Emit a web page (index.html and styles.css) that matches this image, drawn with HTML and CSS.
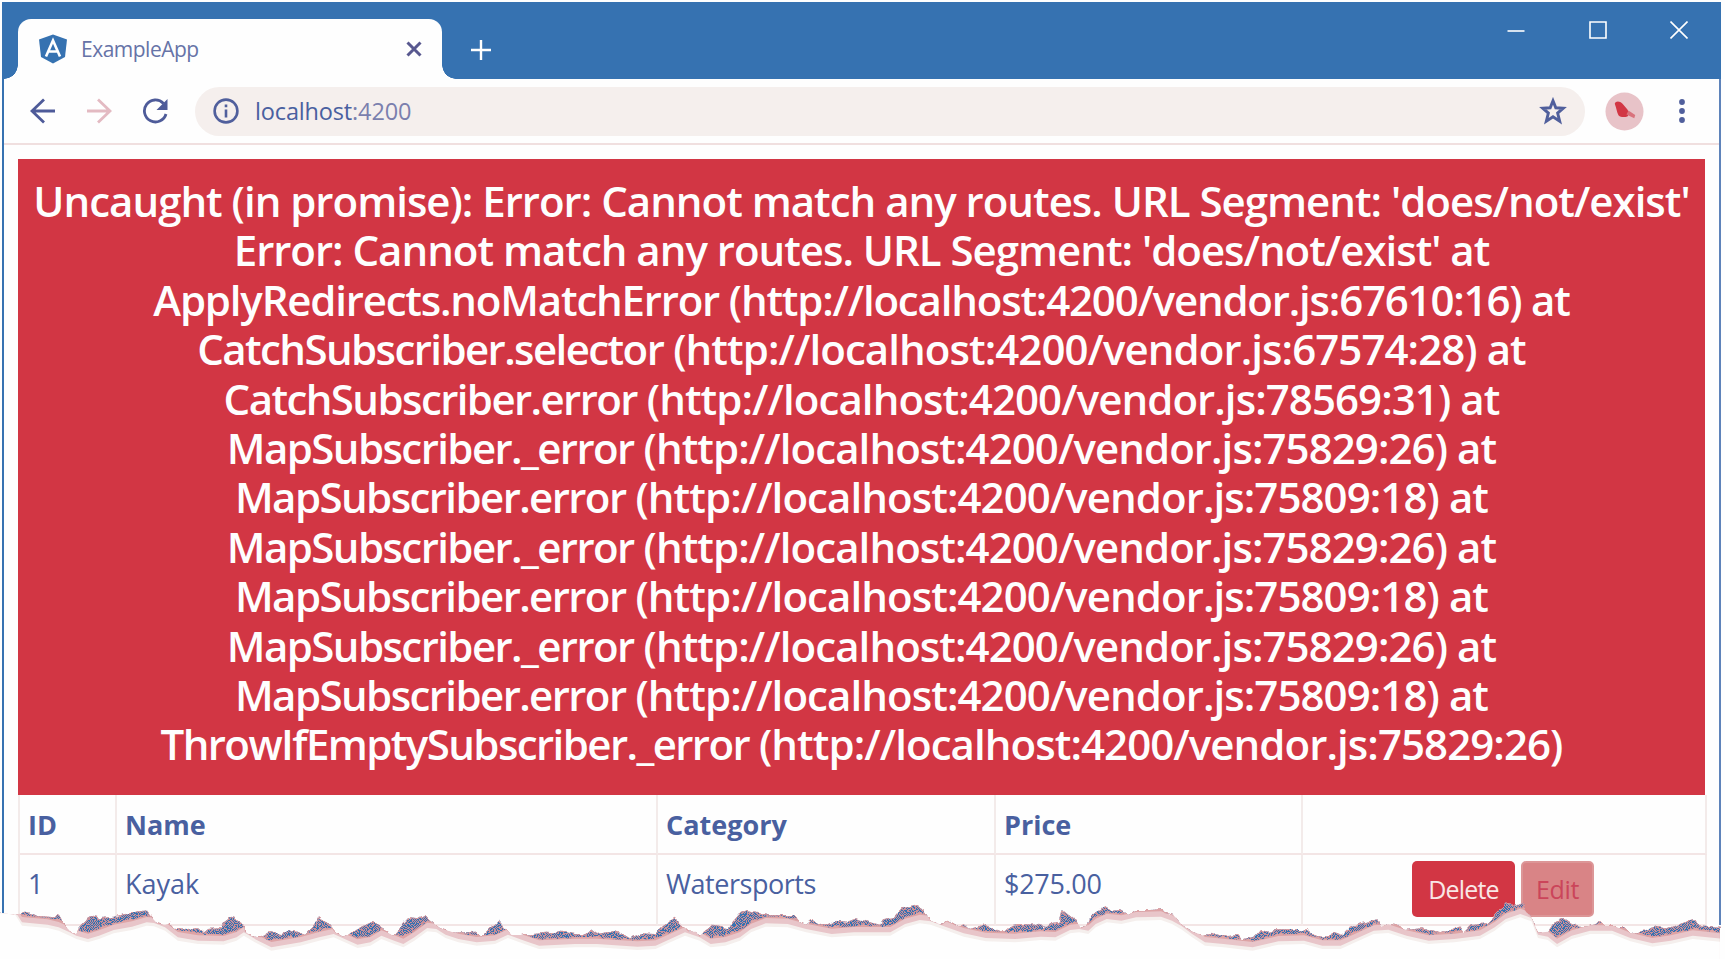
FILE: index.html
```html
<!DOCTYPE html>
<html lang="en">
<head>
<meta charset="utf-8">
<title>ExampleApp</title>
<link rel="stylesheet" href="styles.css">
</head>
<body>
<div class="window">
  <header class="titlebar">
    <div class="tab">
      <svg class="tab-logo" viewBox="0 0 30 30"><path fill="#3672b1" d="M15 0.5 29 5.5 27 23 15 29.5 3 23 1 5.5Z"/><path fill="none" stroke="#fff" stroke-width="2.6" d="M8 22.5 15 6.5 22 22.5M11 17.5H19"/></svg>
      <span class="tab-title">ExampleApp</span>
      <svg class="tab-close" viewBox="0 0 16 16"><path d="M1.5 1.5 14.5 14.5M14.5 1.5 1.5 14.5"/></svg>
    </div>
    <svg class="new-tab" viewBox="0 0 22 22"><path d="M11 1V21M1 11H21"/></svg>
    <div class="controls">
      <svg viewBox="0 0 18 18"><path d="M0.5 10H17.5"/></svg>
      <svg viewBox="0 0 18 18"><path d="M1 1H17V17H1Z"/></svg>
      <svg viewBox="0 0 18 18"><path d="M0.5 0.5 17.5 17.5M17.5 0.5 0.5 17.5"/></svg>
    </div>
  </header>
  <nav class="toolbar">
    <svg class="nav-icon" viewBox="0 0 26 26"><path d="M25 13H2M14 1.5 2 13 14 24.5"/></svg>
    <svg class="nav-icon forward" viewBox="0 0 26 26"><path d="M1 13H24M12 1.5 24 13 12 24.5"/></svg>
    <svg class="nav-icon" viewBox="0 0 26 26"><path d="M21.5 5.5A11 11 0 1 0 24 16"/><path class="solid" d="M25.5 1V12H14.5Z"/></svg>
    <div class="address">
      <svg class="info" viewBox="0 0 26 26"><circle cx="13" cy="13" r="11.4"/><path d="M13 11.5V19.5M13 6.5V9.2"/></svg>
      <span class="url"><b>localhost</b>:4200</span>
      <svg class="star" viewBox="0 0 26 26"><path d="M13 3.5 15.6 10 22.5 10.4 17.3 14.9 19.2 22.5 13 18.3 6.8 22.5 8.7 14.9 3.5 10.4 10.4 10Z"/></svg>
    </div>
    <svg class="avatar" viewBox="0 0 40 40"><circle cx="20" cy="20" r="19.5" fill="#e8c3c8"/><path fill="#d23644" d="M10 12C11 9 15 9 18 12L23 18 25 22 23 25C20 26 16 26 14 24C12 21 12 17 10 12Z"/><path fill="#d9727c" d="M24 19 31 23.5 30 27 22 23Z"/></svg>
    <svg class="menu" viewBox="0 0 8 26"><circle cx="4" cy="4" r="2.9"/><circle cx="4" cy="13" r="2.9"/><circle cx="4" cy="22" r="2.9"/></svg>
  </nav>
  <main class="content">
    <div class="banner">
      <div class="l1">Uncaught (in promise): Error: Cannot match any routes. URL Segment: 'does/not/exist'</div>
      <div class="l2">Error: Cannot match any routes. URL Segment: 'does/not/exist' at</div>
      <div class="l3">ApplyRedirects.noMatchError (http://localhost:4200/vendor.js:67610:16) at</div>
      <div class="frame"><span class="fn">CatchSubscriber.selector</span> (http://localhost:4200/vendor.js:67574:28) at</div>
      <div class="frame"><span class="fn">CatchSubscriber.error</span> (http://localhost:4200/vendor.js:78569:31) at</div>
      <div class="frame"><span class="fn">MapSubscriber._error</span> (http://localhost:4200/vendor.js:75829:26) at</div>
      <div class="frame"><span class="fn">MapSubscriber.error</span> (http://localhost:4200/vendor.js:75809:18) at</div>
      <div class="frame"><span class="fn">MapSubscriber._error</span> (http://localhost:4200/vendor.js:75829:26) at</div>
      <div class="frame"><span class="fn">MapSubscriber.error</span> (http://localhost:4200/vendor.js:75809:18) at</div>
      <div class="frame"><span class="fn">MapSubscriber._error</span> (http://localhost:4200/vendor.js:75829:26) at</div>
      <div class="frame"><span class="fn">MapSubscriber.error</span> (http://localhost:4200/vendor.js:75809:18) at</div>
      <div class="frame"><span class="fn">ThrowIfEmptySubscriber._error</span> (http://localhost:4200/vendor.js:75829:26)</div>
    </div>
    <div class="grid">
      <div class="cell head">ID</div><div class="cell head">Name</div><div class="cell head">Category</div><div class="cell head">Price</div><div class="cell head"></div>
      <div class="cell">1</div><div class="cell">Kayak</div><div class="cell sports">Watersports</div><div class="cell price">$275.00</div>
      <div class="cell actions"><span class="btn delete">Delete</span><span class="btn edit">Edit</span></div>
    </div>
  </main>
</div>
<svg class="tear" viewBox="0 0 1725 179">
  <defs>
    <pattern id="grain" width="2" height="2" patternUnits="userSpaceOnUse"><rect width="2" height="2" fill="#c98d98"/><rect width="1" height="1" fill="#3672b1"/><rect x="1" y="1" width="1" height="1" fill="#3672b1"/></pattern>
    <filter id="rough" filterUnits="userSpaceOnUse" x="0" y="0" width="1725" height="179"><feTurbulence type="fractalNoise" baseFrequency="0.14" numOctaves="2" seed="4" result="n"/><feDisplacementMap in="SourceGraphic" in2="n" scale="5" xChannelSelector="R" yChannelSelector="G"/></filter>
    <clipPath id="ridge"><path id="crest" transform="scale(.36671 .33333)" d="M0 398 42 405 70 395 105 408 150 412 157 400 170 425 180 440 195 458 208 462 215 445 240 415 265 403 272 415 310 410 350 400 398 391 412 410 428 430 450 436 463 428 475 443 510 447 540 445 555 458 568 447 600 445 612 425 638 406 650 425 665 435 668 455 690 470 712 472 735 457 768 462 790 452 812 455 835 465 850 445 870 409 890 425 912 455 935 470 960 458 985 440 1020 423 1040 445 1060 458 1072 468 1090 445 1118 412 1140 415 1160 402 1170 420 1200 445 1215 450 1240 458 1298 455 1312 470 1335 445 1360 422 1375 440 1395 465 1420 465 1450 462 1490 458 1510 460 1532 455 1568 462 1593 462 1610 447 1628 462 1673 453 1698 462 1718 475 1748 460 1783 462 1808 435 1843 410 1853 430 1878 455 1898 455 1908 470 1918 455 1943 437 1988 445 1998 425 2018 400 2038 390 2068 397 2093 405 2163 405 2178 425 2198 435 2216 418 2238 432 2258 432 2278 422 2308 425 2333 415 2368 425 2398 435 2408 418 2438 410 2458 385 2496 374 2518 390 2538 422 2568 435 2583 422 2608 438 2628 433 2643 448 2686 433 2718 450 2738 455 2758 435 2783 432 2838 435 2848 445 2868 430 2890 425 2898 390 2918 408 2936 425 2948 445 2966 435 2978 400 3013 378 3033 392 3053 390 3078 405 3098 390 3136 390 3166 388 3176 400 3201 405 3223 435 3251 455 3276 465 3316 460 3351 468 3376 465 3386 478 3421 470 3436 450 3466 455 3481 448 3536 448 3546 455 3561 447 3591 470 3626 468 3636 455 3661 465 3681 443 3711 430 3756 418 3766 440 3786 432 3806 435 3831 450 3876 445 3926 460 3956 450 3978 437 3991 458 4011 435 4056 430 4076 405 4106 370 4126 380 4151 368 4161 395 4176 412 4194 458 4221 455 4236 430 4261 415 4286 432 4326 440 4364 423 4376 438 4426 438 4446 460 4481 452 4511 440 4546 445 4581 432 4618 418 4631 436 4690 440V537H0Z"/></clipPath>
    <path id="under" d="M0 388 40 390 60 425 130 432 160 440 190 455 208 465 240 475 270 465 310 448 360 438 400 425 420 427 450 440 485 470 540 480 610 482 645 470 665 455 700 478 740 500 820 485 870 470 910 460 940 475 975 492 1010 485 1040 465 1075 480 1100 490 1130 470 1165 442 1190 445 1215 462 1250 475 1300 485 1350 480 1385 462 1430 480 1470 495 1568 490 1628 490 1738 498 1788 495 1828 475 1868 455 1908 470 1938 490 1978 485 2018 470 2048 445 2088 428 2148 430 2198 445 2268 460 2328 455 2428 455 2468 430 2508 418 2538 422 2578 438 2628 458 2688 472 2768 475 2838 468 2878 470 2918 448 2943 445 2968 450 2988 430 3018 415 3058 420 3098 410 3166 408 3196 420 3223 437 3251 460 3286 485 3336 490 3416 500 3486 482 3556 480 3606 495 3656 495 3696 475 3746 450 3786 447 3836 465 3896 480 3966 475 4036 465 4076 440 4106 415 4146 400 4176 412 4194 462 4221 468 4246 490 4286 465 4336 450 4396 450 4446 472 4506 488 4556 480 4616 465 4704 475V600H0Z"/>
  </defs>
  <g filter="url(#rough)">
    <g clip-path="url(#ridge)">
      <rect width="1725" height="179" fill="url(#grain)"/>
      <use href="#crest" fill="none" stroke="#d99ba0" stroke-width="4"/>
      <g transform="scale(.36671 .33333)">
        <use href="#under" y="-19" fill="#dda3a5"/>
      </g>
    </g>
  </g>
  <g clip-path="url(#ridge)">
    <g transform="scale(.36671 .33333)" stroke-linejoin="round">
      <use href="#under" y="-14" fill="#e8c5c9"/>
      <use href="#under" y="2" fill="#f5efed"/>
      <use href="#under" y="12" fill="#fefefe"/>
    </g>
  </g>
</svg>
</body>
</html>
```
FILE: styles.css
```css
* { box-sizing: border-box; }
body {
  margin: 0;
  width: 1725px;
  height: 959px;
  overflow: hidden;
  position: relative;
  background: #fefefe;
  color: #4960a0;
  font-family: "Open Sans", "Noto Sans", sans-serif;
}
svg { display: block; fill: none; flex: none; }
.window {
  margin: 2px 4px 0 2px;
  height: 923px;
  border-right: 2px solid #5e83ba;
  border-left: 2px solid #3672b1;
}
.titlebar {
  height: 77px;
  margin: 0 -2px;
  background: #3672b1;
  display: flex;
  align-items: flex-start;
}
.tab {
  position: relative;
  margin: 17px 0 0 16px;
  width: 424px;
  height: 60px;
  background: #fefefe;
  border-radius: 13px 13px 0 0;
  display: flex;
  align-items: center;
  padding: 0 20px;
}
.tab::before, .tab::after {
  content: "";
  position: absolute;
  bottom: 0;
  width: 14px;
  height: 14px;
}
.tab::before { left: -14px; background: radial-gradient(circle at 0 0, transparent 13.5px, #fefefe 14px); }
.tab::after { right: -14px; background: radial-gradient(circle at 100% 0, transparent 13.5px, #fefefe 14px); }
.tab-logo { width: 30px; height: 30px; }
.tab-title { margin-left: 13px; font-size: 21px; letter-spacing: -.5px; color: #6673a7; }
.tab-close { width: 16px; height: 16px; margin-left: auto; stroke: #58588f; stroke-width: 3; }
.new-tab { width: 22px; height: 22px; margin: 37px 0 0 28px; stroke: #fff; stroke-width: 2.4; }
.controls { margin: 19px 33px 0 auto; display: flex; gap: 63.5px; stroke: #fff; stroke-width: 1.6; }
.controls svg { width: 18px; height: 18px; }
.toolbar {
  height: 66px;
  border-bottom: 2px solid #f0dfdf;
  display: flex;
  align-items: center;
  padding: 0 12px 0 26px;
}
.nav-icon { width: 26px; height: 26px; margin-right: 30px; stroke: #4e5b99; stroke-width: 2.8; }
.nav-icon.forward { stroke: #e3bac2; }
.solid { fill: #4e5b99; stroke: none; }
.address {
  flex: 1;
  height: 49px;
  margin-left: -3px;
  border-radius: 25px;
  background: #f5efed;
  display: flex;
  align-items: center;
  padding: 0 18px;
}
.info { width: 26px; height: 26px; stroke: #505f9c; stroke-width: 2.6; }
.url { margin-left: 16px; font-size: 23.5px; letter-spacing: -.15px; color: #7b7fae; }
.url b { font-weight: 400; color: #4960a0; }
.star { width: 28px; height: 28px; margin-left: auto; stroke: #505f9c; stroke-width: 2.7; }
.avatar { width: 39px; height: 39px; margin-left: 20px; }
.menu { width: 8px; height: 26px; margin-left: 34px; margin-right: 21px; fill: #505f9c; }
.content { margin: 14px 14px 0; }
.banner {
  height: 636px;
  background: #d23644;
  color: #fefefe;
  text-align: center;
  white-space: nowrap;
  font-size: 42px;
  font-weight: 600;
  line-height: 49.4px;
  padding-top: 17px;
  display: flex;
  flex-direction: column;
  align-items: center;
}
.l1 { letter-spacing: -1px; }
.l2 { letter-spacing: -1.01px; }
.l3 { letter-spacing: -1.19px; }
.frame { letter-spacing: -.93px; }
.fn { letter-spacing: -1.58px; }
.grid {
  display: grid;
  grid-template-columns: 97px 541px 338px 307px 404px;
  grid-template-rows: 60px 71px;
  margin-right: -1px;
  border-left: 2px solid #f3ebea;
}
.cell {
  border-right: 2px solid #f3ebea;
  border-bottom: 2px solid #f3e5e5;
  padding: 9px 8px;
  font-size: 27px;
  line-height: 40px;
}
.head { font-weight: 700; padding-top: 10px; }
.sports { letter-spacing: -.45px; }
.price { letter-spacing: -.3px; }
.actions { display: flex; gap: 6px; padding: 6px 109px; }
.btn {
  height: 56px;
  border-radius: 5px;
  font-size: 25px;
  line-height: 57px;
  text-align: center;
}
.delete { width: 103px; background: #d23644; color: #f9e6e6; letter-spacing: -.8px; }
.edit { width: 73px; background: #d98486; border: 2px solid #dc9697; line-height: 53px; color: #cb455a; font-weight: 500; letter-spacing: -.4px; }
.tear { position: absolute; left: 0; top: 780px; width: 1725px; height: 179px; }
```
